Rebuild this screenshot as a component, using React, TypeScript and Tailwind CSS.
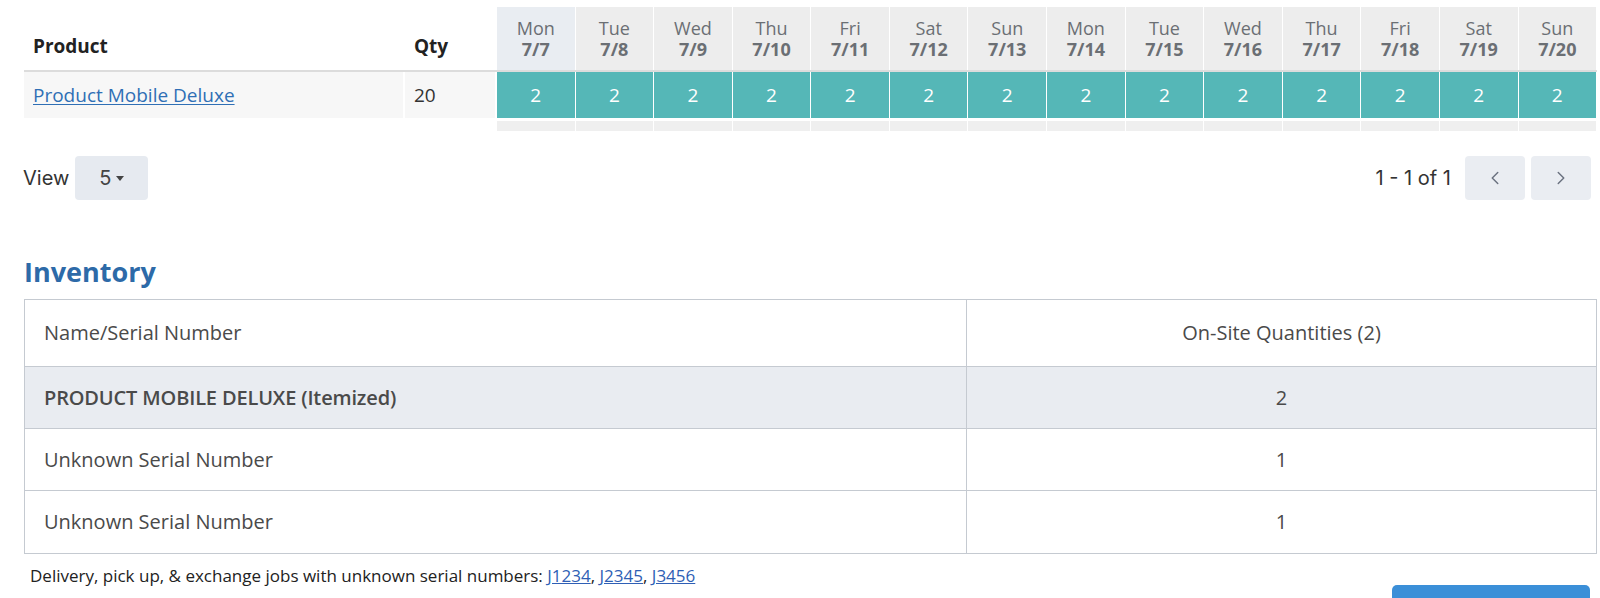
import { ChevronLeft, ChevronRight } from "lucide-react";

const days = [
  ["Mon", "7/7"],
  ["Tue", "7/8"],
  ["Wed", "7/9"],
  ["Thu", "7/10"],
  ["Fri", "7/11"],
  ["Sat", "7/12"],
  ["Sun", "7/13"],
  ["Mon", "7/14"],
  ["Tue", "7/15"],
  ["Wed", "7/16"],
  ["Thu", "7/17"],
  ["Fri", "7/18"],
  ["Sat", "7/19"],
  ["Sun", "7/20"],
];

const rows = [
  { name: "PRODUCT MOBILE DELUXE (Itemized)", qty: "2", shaded: true },
  { name: "Unknown Serial Number", qty: "1", shaded: false },
  { name: "Unknown Serial Number", qty: "1", shaded: false },
];

const App = () => {
  return (
    <div className="w-[1600px] h-[598px] overflow-hidden bg-white pl-6 pr-[3px] pt-[7px] font-['Open_Sans',sans-serif] text-[#333]">
      {/* Availability grid */}
      <div className="flex h-[63px] items-stretch">
        <div className="w-[381px] flex items-end pb-[10px] pl-[9px] text-[19px] font-bold text-[#222]">Product</div>
        <div className="w-[92px] flex items-end pb-[10px] pl-[9px] text-[19px] font-bold text-[#222]">Qty</div>
        {days.map(([d, n], i) => (
          <div
            key={i}
            className={`flex-1 flex flex-col items-center justify-center border-r border-white leading-[21px] text-[18px] text-[#6b6f74] ${i === 0 ? "bg-[#e9edf2]" : "bg-[#ededed]"}`}
          >
            <span>{d}</span>
            <span className="font-bold">{n}</span>
          </div>
        ))}
      </div>
      <div className="h-[2px] bg-[#dcdcdc]" />
      <div className="flex h-[46px] items-stretch">
        <div className="w-[381px] flex items-center pl-[9px] bg-[#f7f7f7] border-r-2 border-white">
          <a href="#" className="text-[19px] text-[#2f6fb5] underline underline-offset-2">Product Mobile Deluxe</a>
        </div>
        <div className="w-[92px] flex items-center pl-[9px] bg-[#f7f7f7] text-[19px] text-[#333] border-r-2 border-white">20</div>
        {days.map((_, i) => (
          <div key={i} className="flex-1 flex items-center justify-center bg-[#55b7b7] border-r border-white text-[19px] text-white">
            2
          </div>
        ))}
      </div>
      <div className="flex h-[10px] mt-[3px]">
        <div className="w-[473px]" />
        {days.map((_, i) => (
          <div key={i} className="flex-1 bg-[#efefef] border-r border-white" />
        ))}
      </div>

      {/* Paging */}
      <div className="flex items-center justify-between mt-[25px] h-[44px] pr-[6px] font-['Inter',sans-serif]">
        <div className="flex items-center gap-[6px]">
          <span className="text-[20px] text-[#333] -ml-[1px]">View</span>
          <button className="h-[44px] w-[73px] rounded-[4px] bg-[#e6eaf0] flex items-center justify-center gap-[5px] text-[20px] text-[#444]">
            5
            <svg width="8" height="5" viewBox="0 0 8 5"><path d="M0 0h8L4 5z" fill="#444" /></svg>
          </button>
        </div>
        <div className="flex items-center gap-[14px]">
          <span className="text-[20px] text-[#333]">1 - 1 of 1</span>
          <div className="flex gap-[6px]">
            <button className="h-[44px] w-[60px] rounded-[4px] bg-[#eaedf2] flex items-center justify-center text-[#6b7280]">
              <ChevronLeft size={22} strokeWidth={1.6} />
            </button>
            <button className="h-[44px] w-[60px] rounded-[4px] bg-[#eaedf2] flex items-center justify-center text-[#6b7280]">
              <ChevronRight size={22} strokeWidth={1.6} />
            </button>
          </div>
        </div>
      </div>

      {/* Inventory */}
      <h2 className="mt-[55px] text-[27px] leading-[34px] font-bold text-[#2d6aa8]">Inventory</h2>
      <div className="mt-[10px] border border-[#c5cad1] text-[20px] text-[#4a4a4a]">
        <div className="flex h-[67px] border-b border-[#c5cad1]">
          <div className="w-[942px] flex items-center pl-[19px] border-r border-[#c5cad1]">Name/Serial Number</div>
          <div className="flex-1 flex items-center justify-center">On-Site Quantities (2)</div>
        </div>
        {rows.map((r, i) => (
          <div
            key={i}
            className={`flex h-[62px] ${i < rows.length - 1 ? "border-b border-[#c5cad1]" : ""} ${r.shaded ? "bg-[#e9ecf1]" : ""}`}
          >
            <div className={`w-[942px] flex items-center pl-[19px] border-r border-[#c5cad1] ${r.shaded ? "font-semibold tracking-[-0.15px]" : ""}`}>{r.name}</div>
            <div className="flex-1 flex items-center justify-center">{r.qty}</div>
          </div>
        ))}
      </div>
      <div className="flex items-start justify-between">
        <p className="mt-[9px] ml-[6px] text-[17px] text-[#222]">
          Delivery, pick up, &amp; exchange jobs with unknown serial numbers:{" "}
          <a href="#" className="text-[#2f5fb5] underline">J1234</a>,{" "}
          <a href="#" className="text-[#2f5fb5] underline">J2345</a>,{" "}
          <a href="#" className="text-[#2f5fb5] underline">J3456</a>
        </p>
        <div className="mt-[31px] mr-[7px] w-[198px] h-[20px] rounded-t-[5px] bg-[#3b8fd8]" />
      </div>
    </div>
  );
};

export default App;
